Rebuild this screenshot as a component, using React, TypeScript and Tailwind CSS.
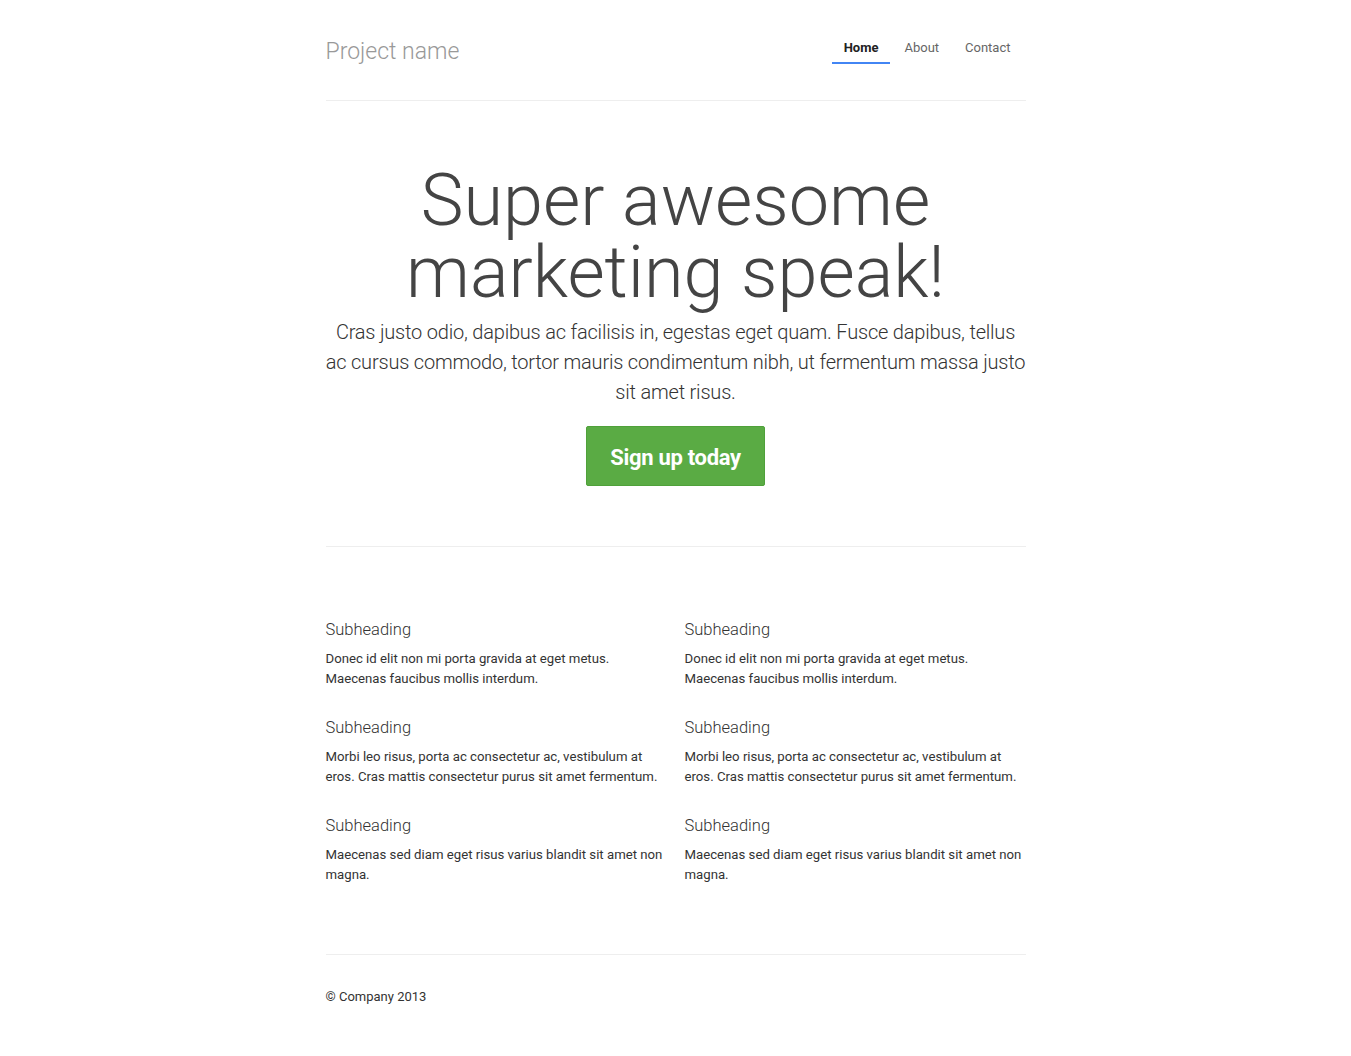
import React from "react";

const font = { fontFamily: "Roboto, 'Noto Sans', sans-serif" };

const items = [
  ["Donec id elit non mi porta gravida at eget metus. Maecenas faucibus mollis interdum."],
  ["Morbi leo risus, porta ac consectetur ac, vestibulum at eros. Cras mattis consectetur purus sit amet fermentum."],
  ["Maecenas sed diam eget risus varius blandit sit amet non magna."],
];

function Feature({ text }: { text: string }) {
  return (
    <div>
      <h4 className="text-[16.5px] leading-[20px] font-light text-[#333] mb-[9px]">Subheading</h4>
      <p className="text-[13.2px] leading-[20px] text-[#333]">{text}</p>
    </div>
  );
}

export default function App() {
  return (
    <div className="bg-white min-h-[1056px]" style={font}>
      <div className="w-[700px] mx-auto">
        <header className="h-[101px] border-b border-[#eee] flex justify-between items-start">
          <h3 className="mt-[35px] text-[23px] leading-[34px] font-light text-[#999]">Project name</h3>
          <nav className="mt-[30px] flex gap-[2px] mr-[3px]">
            <a className="px-[12px] pt-[8px] pb-[4px] text-[13px] leading-[20px] font-bold text-[#222] border-b-[2px] border-[#4285f4]">Home</a>
            <a className="px-[12px] pt-[8px] pb-[4px] text-[13px] leading-[20px] text-[#666] border-b-[2px] border-transparent">About</a>
            <a className="px-[12px] pt-[8px] pb-[4px] text-[13px] leading-[20px] text-[#666] border-b-[2px] border-transparent">Contact</a>
          </nav>
        </header>
        <section className="h-[446px] border-b border-[#eee] text-center pt-[64px]">
          <h1 className="text-[72px] leading-[72px] font-light text-[#444]">
            Super awesome
            <br />
            marketing speak!
          </h1>
          <p className="text-[20px] leading-[30px] font-light text-[#333] mt-[8px] tracking-[-0.2px]">
            Cras justo odio, dapibus ac facilisis in, egestas eget quam. Fusce dapibus, tellus ac cursus commodo, tortor mauris condimentum nibh, ut fermentum massa justo sit amet risus.
          </p>
          <button className="mt-[19px] w-[179px] h-[60px] bg-[#5aab44] border border-[#4fa13a] rounded-[2px] text-white text-[22px] font-bold tracking-[-0.3px]">
            <span className="relative top-[1px]">Sign up today</span>
          </button>
        </section>
        <section className="grid grid-cols-[339px_341px] gap-x-[20px] pt-[73px] pb-[69px] border-b border-[#eee]">
          <div className="flex flex-col gap-[29px]">
            {items.map((t, i) => (
              <Feature key={i} text={t[0]} />
            ))}
          </div>
          <div className="flex flex-col gap-[29px]">
            {items.map((t, i) => (
              <Feature key={i} text={t[0]} />
            ))}
          </div>
        </section>
        <footer className="pt-[32px]">
          <p className="text-[13px] leading-[20px] text-[#333]">© Company 2013</p>
        </footer>
      </div>
    </div>
  );
}
